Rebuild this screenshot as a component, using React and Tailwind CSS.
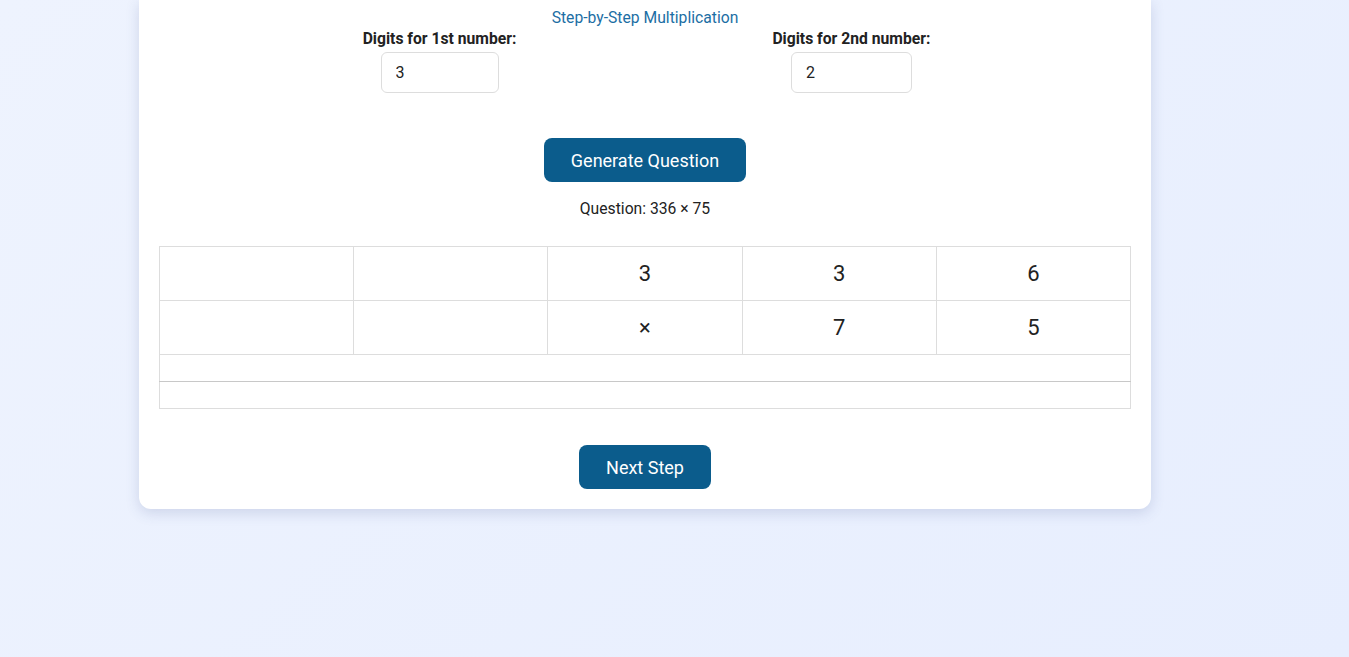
import { useState } from 'react';

export default function App() {
  const [digits1, setDigits1] = useState('3');
  const [digits2, setDigits2] = useState('2');
  const top = ['', '', '3', '3', '6'];
  const bottom = ['', '', '×', '7', '5'];

  return (
    <div className="min-h-screen bg-[linear-gradient(135deg,#eef3fe,#e7eefe)] font-['Roboto',sans-serif] text-[#222]">
      <div className="ml-[139px] w-[1012px] bg-white rounded-b-xl shadow-[0_4px_14px_rgba(60,80,140,0.18)] px-5 pt-2 pb-5">
        <p className="text-center text-[15.7px] leading-5 text-[#1c6ea4]">Step-by-Step Multiplication</p>

        <div className="flex justify-center gap-64 mt-[1px] pl-[3px]">
          <div className="flex flex-col items-center">
            <label className="text-[15.7px] font-bold leading-5">Digits for 1st number:</label>
            <input
              value={digits1}
              onChange={(e) => setDigits1(e.target.value)}
              className="mt-[3px] w-[118px] h-[41px] px-[14px] border border-[#ddd] rounded-md text-[16px] outline-none"
            />
          </div>
          <div className="flex flex-col items-center">
            <label className="text-[15.7px] font-bold leading-5">Digits for 2nd number:</label>
            <input
              value={digits2}
              onChange={(e) => setDigits2(e.target.value)}
              className="mt-[3px] w-[121px] h-[41px] px-[14px] border border-[#ddd] rounded-md text-[16px] outline-none"
            />
          </div>
        </div>

        <div className="flex justify-center mt-[45px]">
          <button className="h-11 px-[27px] rounded-lg bg-[#0b5c8c] text-white text-[18px]">Generate Question</button>
        </div>

        <p className="text-center text-[15.7px] leading-5 mt-[17px]">Question: 336 × 75</p>

        <table className="w-full mt-[27px] border-collapse table-fixed">
          <tbody>
            <tr className="h-[54px]">
              {top.map((d, i) => (
                <td key={i} className="border border-[#ddd] text-center text-[22px]">{d}</td>
              ))}
            </tr>
            <tr className="h-[54px]">
              {bottom.map((d, i) => (
                <td key={i} className="border border-[#ddd] text-center text-[22px]">{d}</td>
              ))}
            </tr>
            <tr className="h-[27px]">
              <td colSpan={5} className="border border-[#ddd] border-b-[#c8c8c8]"></td>
            </tr>
            <tr className="h-[27px]">
              <td colSpan={5} className="border border-[#ddd]"></td>
            </tr>
          </tbody>
        </table>

        <div className="flex justify-center mt-[36px]">
          <button className="h-11 px-[27px] rounded-lg bg-[#0b5c8c] text-white text-[18px]">Next Step</button>
        </div>
      </div>
    </div>
  );
}
